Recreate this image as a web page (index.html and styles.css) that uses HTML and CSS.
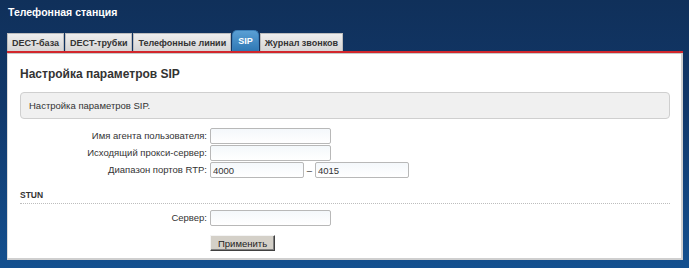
FILE: index.html
```html
<!DOCTYPE html>
<html lang="ru">
<head>
    <meta charset="UTF-8">
    <title>Телефонная станция</title>
    <link rel="stylesheet" href="styles.css">
</head>
<body>
    <h1 class="page-title">Телефонная станция</h1>
    <ul class="tabs">
        <li class="tab">DECT-база</li>
        <li class="tab">DECT-трубки</li>
        <li class="tab">Телефонные линии</li>
        <li class="tab active">SIP</li>
        <li class="tab">Журнал звонков</li>
    </ul>
    <div class="panel">
        <h2 class="panel-title">Настройка параметров SIP</h2>
        <div class="info">Настройка параметров SIP.</div>
        <form class="fields" autocomplete="off">
            <label for="agent">Имя агента пользователя:</label>
            <div class="field"><input type="text" id="agent" class="wide"></div>

            <label for="proxy">Исходящий прокси-сервер:</label>
            <div class="field"><input type="text" id="proxy" class="wide"></div>

            <label for="rtpFrom">Диапазон портов RTP:</label>
            <div class="field">
                <input type="text" id="rtpFrom" class="port" value="4000">
                <span class="dash">&ndash;</span>
                <input type="text" id="rtpTo" class="port" value="4015">
            </div>
        </form>
        <h3 class="section">STUN</h3>
        <form class="fields" autocomplete="off">
            <label for="stun">Сервер:</label>
            <div class="field"><input type="text" id="stun" class="wide"></div>

            <span></span>
            <div class="field buttons"><button type="button">Применить</button></div>
        </form>
    </div>
</body>
</html>
```

FILE: styles.css
```css
body {
    margin: 0;
    height: 268px;
    font-family: "Liberation Sans", Arial, sans-serif;
    font-size: 9.5px;
    color: #333;
    background: linear-gradient(#10305a 0%, #11386a 40%, #14508f 100%);
    overflow: hidden;
}

.page-title {
    margin: 0;
    padding: 6px 8px 0;
    height: 24px;
    font-size: 10.5px;
    font-weight: bold;
    color: white;
}

.tabs {
    list-style: none;
    margin: 0 0 0 7px;
    padding: 0;
    display: flex;
    align-items: flex-end;
    height: 21px;
}

.tab {
    height: 17px;
    line-height: 18px;
    padding: 0 4px;
    font-size: 9px;
    font-weight: bold;
    color: #333;
    background: linear-gradient(#ededed, #d6d6d6);
    border: 1px solid #bdbdbd;
    border-bottom: none;
    margin-right: 1px;
}

    .tab.active {
        height: 20px;
        line-height: 21px;
        padding: 0 5px;
        color: white;
        background: linear-gradient(#5a9fd4, #2f78b4);
        border-color: #3b7fb8;
        border-radius: 5px 5px 0 0;
    }

.panel {
    margin: 0 6px 0 7px;
    padding: 14px 12px 0 13px;
    height: 193px;
    background: white;
    border-top: 2px solid #d2262c;
    box-shadow: inset 0 1px 0 #c9c9c9, inset -2px -2px 0 #cfcfcf, inset 1px 0 0 #dcdcdc;
}

.panel-title {
    margin: 0 0 11px;
    line-height: 14px;
    font-size: 12px;
    font-weight: bold;
    color: #333;
}

.info {
    height: 25px;
    line-height: 25px;
    padding: 0 8px;
    background: #f0f0f0;
    border: 1px solid #cfcfcf;
    border-radius: 4px;
    color: #333;
    margin: 0 1px 9px 0;
}

.fields {
    display: grid;
    grid-template-columns: 187px auto;
    column-gap: 3px;
    row-gap: 1px;
    margin: 0;
}

    .fields label {
        text-align: right;
        line-height: 16px;
        color: #333;
    }

.field {
    display: flex;
    align-items: center;
}

input[type="text"] {
    box-sizing: border-box;
    height: 16px;
    padding: 0 2px;
    font-family: "Liberation Sans", Arial, sans-serif;
    font-size: 9.5px;
    color: #333;
    border: 1px solid #b8b8b8;
    border-radius: 2px;
    background: linear-gradient(#f4f8fb, #ffffff);
    margin: 0;
}

input.wide {
    width: 121px;
}

input.port {
    width: 94px;
}

.dash {
    width: 11px;
    text-align: center;
    color: #333;
}

.section {
    margin: 12px 1px 6px 0;
    padding-bottom: 2px;
    line-height: 11px;
    font-size: 8.5px;
    font-weight: bold;
    color: #333;
    border-bottom: 1px dotted #bdbdbd;
}

.buttons {
    padding-top: 8px;
}

button {
    height: 16px;
    padding: 0 7px;
    font-family: "Liberation Sans", Arial, sans-serif;
    font-size: 9.5px;
    color: #222;
    background: #d4d0c8;
    border: 1px solid;
    border-color: #f4f4f4 #404040 #404040 #f4f4f4;
    box-shadow: inset -1px -1px 0 #808080;
}
```
